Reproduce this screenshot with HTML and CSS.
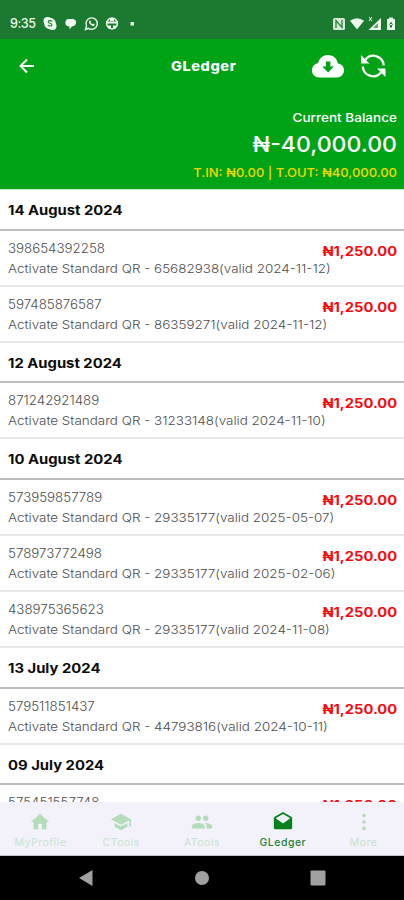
FILE: index.html
```
<!DOCTYPE html>
<html lang="en">
<head>
<meta charset="utf-8">
<title>GLedger</title>
<link rel="stylesheet" href="styles.css">
</head>
<body>
<div class="status">
  <span class="time">9:35</span>
  <svg class="notif" width="90" height="16" viewBox="0 0 90 16" fill="#eef8ee">
    <circle cx="7" cy="7.500" r="5.800"/><circle cx="4.500" cy="5" r="4"/><circle cx="9.500" cy="10" r="4"/>
    <path d="M9 5.500C8 4.200 5.200 4.400 5.200 5.900C5.200 7.500 9 7 9 8.800C9 10.500 5.800 10.200 5 9" fill="none" stroke="#1b7a30" stroke-width="1.100"/>
    <path d="M24.500 3h6q3 1 2.500 4q-.5 3-4 3.500l-2.500 3v-3q-4-.3-4.200-3.500q0-3 2.200-4z"/>
    <path d="M42.500 13.500l1-3.500a5.700 5.700 0 1 1 2 2.300z" fill="none" stroke="#eef8ee" stroke-width="1.400"/>
    <path d="M46.300 4.700q-1.200 1.500.8 3.500t4 1.900l.6-1.700-1.600-.9-.9.8-1.700-1.700.6-.8-.7-1.400z"/>
    <circle cx="69" cy="7.500" r="5.400" fill="none" stroke="#eef8ee" stroke-width="1.500"/>
    <path d="M63 5.500h12v2H63zM65 9.500h3v3h-3zM70 9.500h3v3h-3zM67 2h4v3h-4z"/>
    <rect x="87.500" y="6" width="3.500" height="3.500"/>
  </svg>
  <svg class="system" width="66" height="16" viewBox="0 0 66 16" fill="#eef8ee">
    <rect x="2" y="2" width="12" height="12" rx="1.500" fill="#d5e8d8"/><path d="M5 12V4.500l6 7V4" fill="none" stroke="#1b7a30" stroke-width="1.200"/>
    <path d="M19 4.800q7-5.200 14 0L26 13.500z"/>
    <path d="M37.500 14L50 2v12z"/><path d="M42 12l5-5v5z" fill="#6aa276"/><path d="M38 1l3 4M41 1l-3 4" stroke="#eef8ee"/>
    <path d="M56 3h2V1.500h4V3h2v11h-8z"/><path d="M60 5.500l-2 3.500h4zM59 8h2v3.500h-2z" fill="#1b7a30"/>
  </svg>
</div>
<header class="top">
  <div class="bar">
    <svg class="back" width="16" height="16" viewBox="0 0 16 16" fill="none" stroke="#fff" stroke-width="1.900"><path d="M15 8H2M8 1.500L1.500 8L8 14.500"/></svg>
    <h1 class="title">GLedger</h1>
    <svg class="cloud" width="32" height="24" viewBox="0 0 32 24"><path fill="#fff" d="M7.500 23.500C3 23.500 0 20.500 0 16.500S2.500 10 6 9.300C7.500 4 11 1 16 1c5.300 0 9 3.500 9.800 8.500 3.700.3 6.200 3 6.200 6.800 0 4-3 7.200-7.200 7.200z"/><path fill="#00a316" d="M13.900 7.500h4.500v5h3.500L16.100 18.600 10.300 12.500h3.600z"/></svg>
    <svg class="sync" width="26" height="26" viewBox="0 0 26 26"><path d="M5.500 6.500A10.300 10.300 0 0 1 23.700 12.500M2.800 13.500A10.300 10.300 0 0 0 21 19.500" fill="none" stroke="#fff" stroke-width="2.300"/><path fill="#fff" d="M1 2l8.500 8.500H1zM25.500 24l-8.500-8.500h8.500z"/></svg>
  </div>
  <div class="summary">
    <div class="label">Current Balance</div>
    <div class="balance">₦-40,000.00</div>
    <div class="totals">T.IN: ₦0.00 | T.OUT: ₦40,000.00</div>
  </div>
</header>
<main class="list">
  <h2 class="date"><span>14 August 2024</span></h2>
  <article class="row"><div class="info"><p class="ref">398654392258</p><p class="desc">Activate Standard QR - 65682938(valid 2024-11-12)</p></div><b class="amount">₦1,250.00</b></article>
  <article class="row"><div class="info"><p class="ref">597485876587</p><p class="desc">Activate Standard QR - 86359271(valid 2024-11-12)</p></div><b class="amount">₦1,250.00</b></article>
  <h2 class="date"><span>12 August 2024</span></h2>
  <article class="row"><div class="info"><p class="ref">871242921489</p><p class="desc">Activate Standard QR - 31233148(valid 2024-11-10)</p></div><b class="amount">₦1,250.00</b></article>
  <h2 class="date"><span>10 August 2024</span></h2>
  <article class="row"><div class="info"><p class="ref">573959857789</p><p class="desc">Activate Standard QR - 29335177(valid 2025-05-07)</p></div><b class="amount">₦1,250.00</b></article>
  <article class="row"><div class="info"><p class="ref">578973772498</p><p class="desc">Activate Standard QR - 29335177(valid 2025-02-06)</p></div><b class="amount">₦1,250.00</b></article>
  <article class="row"><div class="info"><p class="ref">438975365623</p><p class="desc">Activate Standard QR - 29335177(valid 2024-11-08)</p></div><b class="amount">₦1,250.00</b></article>
  <h2 class="date"><span>13 July 2024</span></h2>
  <article class="row"><div class="info"><p class="ref">579511851437</p><p class="desc">Activate Standard QR - 44793816(valid 2024-10-11)</p></div><b class="amount">₦1,250.00</b></article>
  <h2 class="date"><span>09 July 2024</span></h2>
  <article class="row"><div class="info"><p class="ref">575451557748</p></div><b class="amount">₦1,250.00</b></article>
</main>
<nav class="tabs">
  <a class="tab"><svg width="24" height="24" viewBox="0 0 24 24"><path d="M10 20v-6h4v6h5v-8h3L12 3 2 12h3v8z"/></svg><span>MyProfile</span></a>
  <a class="tab"><svg width="24" height="24" viewBox="0 0 24 24"><path d="M5 13.180v4L12 21l7-3.820v-4L12 17zM12 3L1 9l11 6 9-4.910V17h2V9z"/></svg><span>CTools</span></a>
  <a class="tab"><svg width="24" height="24" viewBox="0 0 24 24"><path d="M16 11c1.660 0 2.990-1.340 2.990-3S17.660 5 16 5s-3 1.340-3 3 1.340 3 3 3zm-8 0c1.660 0 2.990-1.340 2.990-3S9.660 5 8 5 5 6.340 5 8s1.340 3 3 3zm0 2c-2.330 0-7 1.170-7 3.500V19h14v-2.500C15 14.170 10.330 13 8 13zm8 0c-.29 0-.62.020-.97.050 1.160.84 1.970 1.970 1.970 3.450V19h6v-2.500c0-2.330-4.670-3.500-7-3.500z"/></svg><span>ATools</span></a>
  <a class="tab active"><svg width="24" height="24" viewBox="0 0 24 24"><path d="M21.990 8c0-.72-.37-1.350-.94-1.700L12 1 2.950 6.300C2.380 6.650 2 7.280 2 8v10c0 1.100.9 2 2 2h16c1.100 0 2-.9 2-2z"/><path fill="#f3f1fa" d="M12 13.500L4 8l8-4.800L20 8z"/></svg><span>GLedger</span></a>
  <a class="tab"><svg width="24" height="24" viewBox="0 0 24 24"><circle cx="12" cy="5" r="2"/><circle cx="12" cy="12" r="2"/><circle cx="12" cy="19" r="2"/></svg><span>More</span></a>
</nav>
<footer class="system-nav">
  <svg width="16" height="18" viewBox="0 0 16 18"><path d="M1 9L14.500 1v16z"/></svg>
  <svg width="16" height="16" viewBox="0 0 16 16"><circle cx="8" cy="8" r="7"/></svg>
  <svg width="16" height="16" viewBox="0 0 16 16"><rect x=".5" y=".5" width="15" height="15" rx="1"/></svg>
</footer>
</body>
</html>
```
FILE: styles.css
```
* { box-sizing: border-box; margin: 0; padding: 0; }
body { width: 404px; height: 900px; overflow: hidden; display: flex; flex-direction: column; background: #fff; font-family: Inter, "DejaVu Sans", sans-serif; }
svg { display: block; flex: none; }
.status { height: 39px; flex: none; background: #1b7a30; display: flex; align-items: center; padding: 8px 7px 0 10px; color: #eef8ee; }
.time { width: 33px; font-size: 12.500px; font-weight: 500; letter-spacing: -.4px; white-space: nowrap; }
.notif { overflow: visible; }
.system { margin-left: auto; }
.top { height: 151px; flex: none; background: #00a316; color: #fff; border-bottom: 1px solid #c5ecca; }
.bar { height: 54px; display: grid; grid-template-columns: 152px 141px 45px 30px; align-items: center; padding-left: 19px; }
.title { font-size: 13px; font-weight: 800; letter-spacing: .5px; transform: scaleX(1.120); transform-origin: left; }
.sync { margin-left: 3px; }
.summary { padding: 15px 7px 0; text-align: right; white-space: nowrap; }
.summary div { transform-origin: right center; }
.label { font-size: 12px; line-height: 20px; font-weight: 500; transform: scaleX(1.130); }
.balance { font-size: 22px; line-height: 33px; font-weight: 500; transform: scaleX(1.050); }
.totals { font-size: 12px; line-height: 24px; font-weight: 500; color: #f0d800; transform: scaleX(1.080); }
.list { height: 612px; flex: none; overflow: hidden; white-space: nowrap; }
.date { height: 40.700px; padding-left: 8px; line-height: 40px; font-size: 13px; font-weight: 700; color: #0c0c0c; border-bottom: 2px solid #bdbdbd; }
.date span { display: inline-block; transform: scaleX(1.140); transform-origin: left; }
.row { height: 56px; display: flex; justify-content: space-between; padding: 8px 7px 0 8px; border-bottom: 2px solid #e7e7e7; }
.info { color: #4e4e4e; font-size: 12.500px; line-height: 20px; font-weight: 300; }
.info p { transform: scaleX(1.065); transform-origin: left; }
.info .desc { font-size: 12px; transform: scaleX(1.120); }
.amount { color: #f30d12; font-size: 13px; line-height: 25px; font-weight: 700; transform: scaleX(1.130); transform-origin: right; }
.tabs { height: 54px; flex: none; display: grid; grid-template-columns: repeat(5, 1fr); background: #f3f1fa; border-bottom: 1px solid #c6c4cc; }
.tab { display: flex; flex-direction: column; align-items: center; padding-top: 9px; font-size: 10.500px; line-height: 14px; letter-spacing: .5px; color: #c8e3cd; }
.tab svg { width: 22px; height: 22px; fill: #b4dcba; }
.tab span { margin-top: 3px; }
.tab.active { color: #258334; font-weight: 500; }
.tab.active svg { fill: #07811b; }
.system-nav { flex: 1; background: #000; display: flex; align-items: center; justify-content: space-between; padding: 0 78px; fill: #a0a0a0; }
```
